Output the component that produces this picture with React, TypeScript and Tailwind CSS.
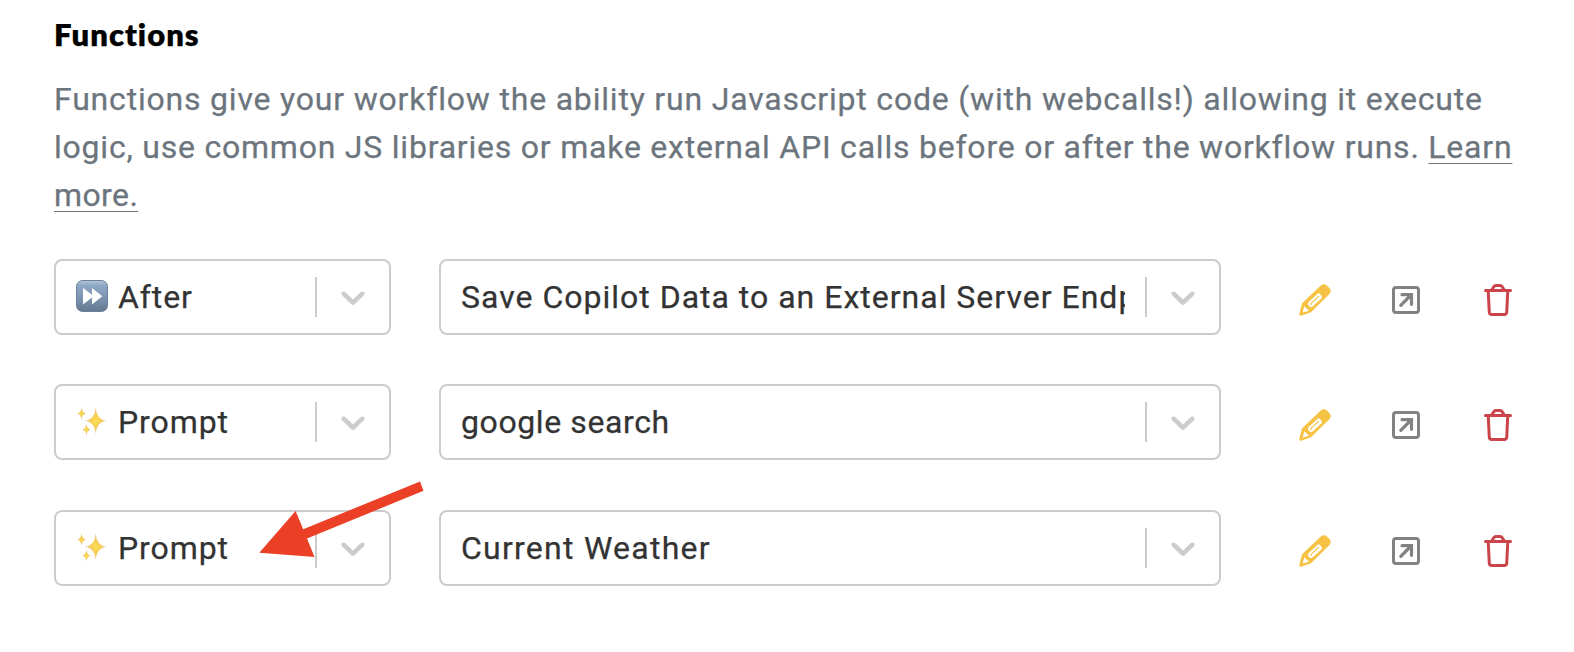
import React from "react";

const chevronPath =
  "M4.516 7.548c0.436-0.446 1.043-0.481 1.576 0l3.908 3.747 3.908-3.747c0.533-0.481 1.141-0.446 1.574 0 0.436 0.445 0.408 1.197 0 1.615-0.406 0.418-4.695 4.502-4.695 4.502-0.217 0.223-0.502 0.335-0.787 0.335s-0.57-0.112-0.789-0.335c0 0-4.287-4.084-4.695-4.502s-0.436-1.17 0-1.615z";

function FastForward() {
  return (
    <svg className="h-8 w-8 shrink-0" viewBox="0 0 32 32">
      <defs>
        <linearGradient id="ff" x1="0" y1="0" x2="0" y2="1">
          <stop offset="0" stopColor="#b4c6d9" />
          <stop offset="0.15" stopColor="#8fa9c8" />
          <stop offset="0.55" stopColor="#7c94b0" />
          <stop offset="1" stopColor="#64788f" />
        </linearGradient>
      </defs>
      <rect x="0.5" y="0.5" width="31" height="31" rx="6" fill="url(#ff)" stroke="#6a819c" />
      <path d="M7 8v16.400l9-6.800v6.800l10.300-8.200L16 8v6.800z" fill="#fff" />
    </svg>
  );
}

function Sparkles() {
  return (
    <svg className="h-8 w-8 shrink-0" viewBox="0 0 32 32">
      <defs>
        <radialGradient id="sp">
          <stop offset="0" stopColor="#fbdf4e" />
          <stop offset="0.4" stopColor="#f6cf58" />
          <stop offset="1" stopColor="#eeb98a" />
        </radialGradient>
      </defs>
      <g fill="url(#sp)">
        <path d="M19.700 2.500Q20.500 14.600 30.500 15.800Q20.500 17 19.700 29.500Q18.900 17 8.900 15.800Q18.900 14.600 19.700 2.500z" />
        <path d="M5.500 2.300Q6.100 7.700 10 8.400Q6.100 9.100 5.500 14.500Q4.900 9.100 1.500 8.400Q4.900 7.700 5.500 2.300z" />
        <path d="M10.400 18.500Q11 23.800 14.700 24.600Q11 25.400 10.400 30.500Q9.800 25.400 6.200 24.600Q9.800 23.800 10.400 18.500z" />
      </g>
    </svg>
  );
}

function Select({
  width,
  icon,
  children,
}: {
  width: string;
  icon?: React.ReactNode;
  children: React.ReactNode;
}) {
  return (
    <div className={`${width} flex h-[76px] shrink-0 items-center rounded-lg border-2 border-[#cccccc] bg-white pl-5`}>
      <div className="flex min-w-0 flex-1 items-center gap-[10px] overflow-hidden">
        {icon && <div className="pb-[2px]">{icon}</div>}
        <div className="whitespace-nowrap leading-[48px]">{children}</div>
      </div>
      <div className="ml-5 h-10 w-[2px] bg-[#cccccc]" />
      <svg className="mx-4 h-10 w-10 fill-[#cccccc]" viewBox="0 0 20 20">
        <path d={chevronPath} />
      </svg>
    </div>
  );
}

function Pencil() {
  return (
    <svg className="h-8 w-8" viewBox="0 0 32 32">
      <path
        d="M0.300 29.800L3.100 19.200L21.800 1.600Q24.300-0.800 27.300 1.100L30.600 4.200Q33 7 30.500 10L12 28.300L2.300 31.700Q0 32.100 0.300 29.800z"
        fill="#f6c244"
      />
      <path d="M5.300 22.200L10 26.800L3.700 28.600z" fill="#fff" />
      <path
        d="M13 20.600L21.800 12.400L19.600 10.200L10.600 18.600Q9.300 20.200 10.800 21.600Q12 22.600 13.400 21.300L22.500 13"
        fill="none"
        stroke="#fff"
        strokeWidth="2"
        strokeLinejoin="round"
      />
    </svg>
  );
}

function OpenExternal() {
  return (
    <svg className="h-7 w-7" viewBox="0 0 28 28" fill="none" stroke="#828282">
      <rect x="1.500" y="1.500" width="25" height="25" rx="2.500" strokeWidth="3" />
      <path d="M8.800 19.300L19 9M10 8.700H19.500V18.300" strokeWidth="3.200" strokeLinecap="round" strokeLinejoin="miter" />
    </svg>
  );
}

function Trash() {
  return (
    <svg className="h-8 w-7" viewBox="0 0 28 32" fill="none" stroke="#cb444a" strokeWidth="3" strokeLinecap="round" strokeLinejoin="round">
      <path d="M1.500 6.500H26.500M4.200 6.500L5.300 28.300Q5.500 30.400 7.600 30.400H20.400Q22.500 30.400 22.700 28.300L23.800 6.500M7.900 5.800L9.600 3Q10.500 1.500 12 1.500H16Q17.500 1.500 18.400 3L20.100 5.800" />
    </svg>
  );
}

function Row({ icon, when, name }: { icon: React.ReactNode; when: React.ReactNode; name: React.ReactNode }) {
  return (
    <div className="flex items-center">
      <Select width="w-[337px]" icon={icon}>
        {when}
      </Select>
      <div className="w-12" />
      <Select width="w-[782px]">{name}</Select>
      <div className="ml-[78px] mt-[6px] flex items-center">
        <Pencil />
        <div className="ml-[60.500px]">
          <OpenExternal />
        </div>
        <div className="ml-[64px]">
          <Trash />
        </div>
      </div>
    </div>
  );
}

const link = "underline decoration-1 underline-offset-[5px] [text-decoration-skip-ink:none]";

export default function App() {
  return (
    <main className="h-[652px] w-[1574px] overflow-hidden bg-white pl-[54px] pt-[10px] font-['Roboto',sans-serif] text-[32px] text-[#333333] [-webkit-text-stroke:0.25px]">
      <h2 className="h-[65px] font-['Lato',sans-serif] text-[31px] font-extrabold leading-[48px] tracking-[1px] text-black [font-variant-ligatures:none]">
        Functions
      </h2>
      <div className="h-[184px] whitespace-nowrap leading-[48px] text-[#6c757d]">
        <div className="tracking-[0.806px]">
          Functions give your workflow the ability run Javascript code (with webcalls!) allowing it execute
        </div>
        <div className="tracking-[0.780px]">
          logic, use common JS libraries or make external API calls before or after the workflow runs.{" "}
          <a className={link}>Learn</a>
        </div>
        <div className="tracking-[0.400px]">
          <a className={link}>more.</a>
        </div>
      </div>
      <div className="relative flex flex-col">
        <Row
          icon={<FastForward />}
          when={<span className="tracking-[0.9px]">After</span>}
          name={<span className="tracking-[1px]">Save Copilot Data to an External Server Endpoint</span>}
        />
        <div className="h-[49px]" />
        <Row
          icon={<Sparkles />}
          when={<span className="tracking-[0.9px]">Prompt</span>}
          name={<span className="tracking-[0.600px]">google search</span>}
        />
        <div className="h-[50px]" />
        <Row
          icon={<Sparkles />}
          when={<span className="tracking-[0.9px]">Prompt</span>}
          name={<span className="tracking-[1.250px]">Current Weather</span>}
        />
        <svg className="absolute left-[205px] top-[222px] h-[78px] w-[165px]" viewBox="259 481 165 78">
          <path d="M259.300 552.800L295.600 511L303.200 529.200L420 481.500L423.500 490.800L307 538.500L314.500 557z" fill="#eb4026" />
        </svg>
      </div>
    </main>
  );
}
